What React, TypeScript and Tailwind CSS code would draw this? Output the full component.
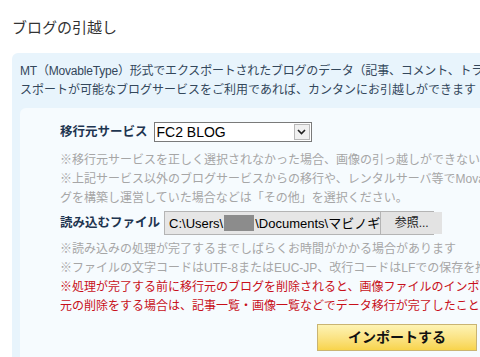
import React from "react"

const FONT = { fontFamily: '"Liberation Sans", "Noto Sans CJK JP", sans-serif' }

const GrayNote = ({ children }: { children: React.ReactNode }) => (
    <div className="whitespace-nowrap text-[12px] leading-[19px] text-[#a6a6a6]">{children}</div>
)

const RedNote = ({ children }: { children: React.ReactNode }) => (
    <div className="whitespace-nowrap text-[12px] leading-[19px] text-[#c8101a]">{children}</div>
)

export default function App() {
    return (
        <div className="w-[480px] h-[357px] overflow-hidden bg-white" style={FONT}>
            <h1 className="pt-[19px] pl-3 text-[15px] leading-[18px] text-[#333]">ブログの引越し</h1>

            {/* 外枠 */}
            <div className="mt-[16px] ml-3 w-[620px] h-[400px] rounded-md bg-[#e8f4fc] pt-[9px] pl-2">
                <div className="whitespace-nowrap text-[12px] leading-[19px] text-[#33475b]">
                    <div className="tracking-[-0.2px]">MT（MovableType）形式でエクスポートされたブログのデータ（記事、コメント、トラックバック）をインポートします。エク</div>
                    <div>スポートが可能なブログサービスをご利用であれば、カンタンにお引越しができます</div>
                </div>

                {/* 内枠 */}
                <div className="mt-[8px] h-[300px] rounded-md bg-[#f6fbfe] pl-10 pt-[14px]">
                    <div className="flex items-center gap-[6px]">
                        <span className="text-[12.5px] font-bold text-[#1e3550]">移行元サービス</span>
                        <div className="flex h-[20px] w-[158px] items-center justify-between border border-[#7a7a7a] bg-white pl-[2px] pr-[1px]">
                            <span className="text-[14px] leading-none text-black">FC2 BLOG</span>
                            <span className="flex h-[16px] w-[16px] items-center justify-center border border-[#b8b8b8] bg-[#f0f0f0]">
                                <svg width="9" height="6" viewBox="0 0 9 6">
                                    <path d="M1 1 L4.5 4.5 L8 1" fill="none" stroke="#222" strokeWidth="1.6" />
                                </svg>
                            </span>
                        </div>
                    </div>

                    <div className="mt-[9px]">
                        <GrayNote>※移行元サービスを正しく選択されなかった場合、画像の引っ越しができない場合があります</GrayNote>
                        <GrayNote>※上記サービス以外のブログサービスからの移行や、レンタルサーバ等でMovableTypeを使ってブロ</GrayNote>
                        <GrayNote>グを構築し運営していた場合などは「その他」を選択ください。</GrayNote>
                    </div>

                    <div className="mt-[3px] flex items-center gap-[4px]">
                        <span className="text-[12.5px] font-bold text-[#1e3550]">読み込むファイル</span>
                        <div className="flex h-[24px] w-[270px] items-center border border-[#b4b4b4] bg-[#e6e6e6] pl-[4px]">
                            <span className="flex items-center whitespace-nowrap text-[13px] leading-none text-black">
                                C:\Users\
                                <span className="mx-[1px] inline-block h-[16px] w-[30px] bg-[#8c8c8c]" />
                                \Documents\マビノギ
                            </span>
                            <span className="ml-auto flex h-[22px] w-[62px] shrink-0 items-center justify-center border-l border-[#b4b4b4] bg-[#e3e3e3] text-[12px] text-[#222]">
                                参照...
                            </span>
                        </div>
                    </div>

                    <div className="mt-[5px]">
                        <GrayNote>※読み込みの処理が完了するまでしばらくお時間がかかる場合があります</GrayNote>
                        <GrayNote>※ファイルの文字コードはUTF-8またはEUC-JP、改行コードはLFでの保存を推奨します</GrayNote>
                        <RedNote>※処理が完了する前に移行元のブログを削除されると、画像ファイルのインポートに失敗します。移行</RedNote>
                        <RedNote>元の削除をする場合は、記事一覧・画像一覧などでデータ移行が完了したことをご確認ください</RedNote>
                    </div>

                    <button className="mt-[8px] ml-[257px] flex h-[27px] w-[160px] items-center justify-center border border-[#c9b472] bg-gradient-to-b from-[#fdf3b4] to-[#f8d44a] text-[14px] font-bold text-[#111]">
                        インポートする
                    </button>
                </div>
            </div>
        </div>
    )
}
